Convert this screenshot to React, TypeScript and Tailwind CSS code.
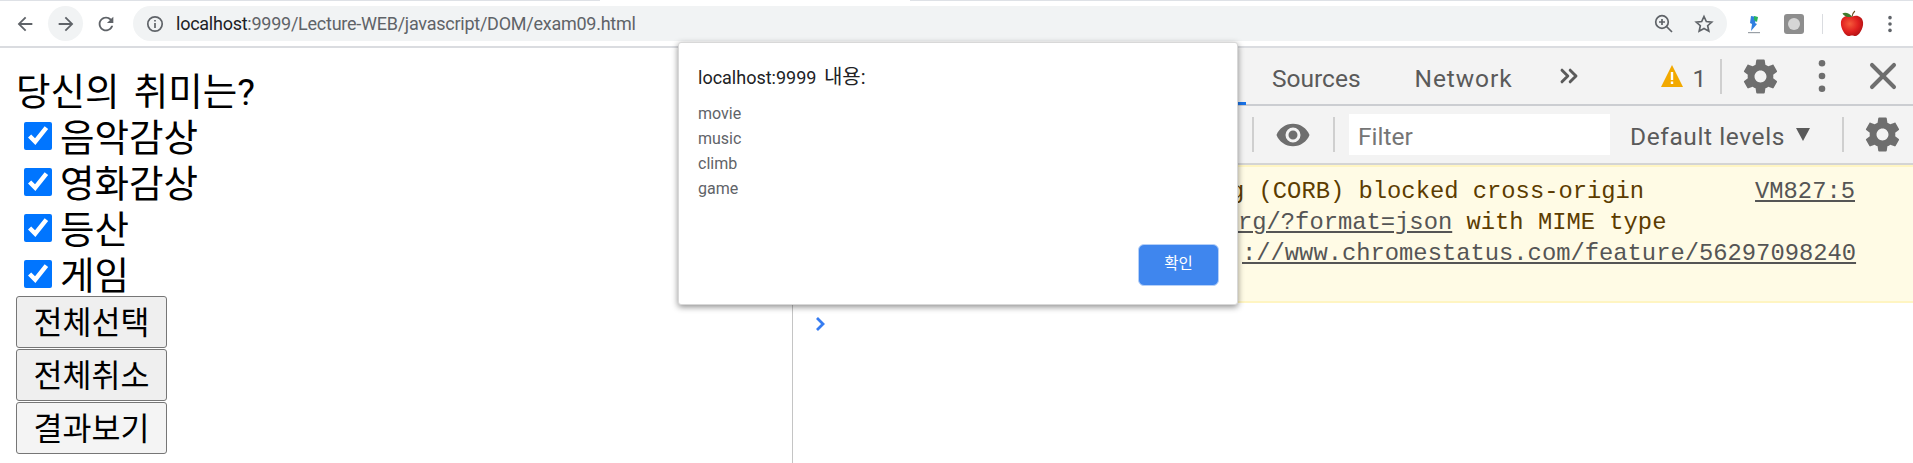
import React from 'react';
import { ChevronsRight, X } from 'lucide-react';

const GEAR =
  'M19.43 12.98c.04-.32.07-.64.07-.98s-.03-.66-.07-.98l2.11-1.65c.19-.15.24-.42.12-.64l-2-3.46c-.12-.22-.39-.3-.61-.22l-2.49 1c-.52-.4-1.08-.73-1.69-.98l-.38-2.65C14.46 2.18 14.25 2 14 2h-4c-.25 0-.46.18-.49.42l-.38 2.65c-.61.25-1.17.59-1.69.98l-2.49-1c-.23-.09-.49 0-.61.22l-2 3.46c-.13.22-.07.49.12.64l2.11 1.65c-.04.32-.07.65-.07.98s.03.66.07.98l-2.11 1.65c-.19.15-.24.42-.12.64l2 3.46c.12.22.39.3.61.22l2.49-1c.52.4 1.08.73 1.69.98l.38 2.65c.03.24.24.42.49.42h4c.25 0 .46-.18.49-.42l.38-2.65c.61-.25 1.17-.59 1.69-.98l2.49 1c.23.09.49 0 .61-.22l2-3.46c.12-.22.07-.49-.12-.64l-2.11-1.65zM12 15.5c-1.93 0-3.5-1.57-3.5-3.5s1.57-3.5 3.5-3.5 3.5 1.57 3.5 3.5-1.57 3.5-3.5 3.5z';

function Glyph({ d, className }: { d: string; className: string }) {
  return (
    <svg viewBox="0 0 24 24" className={className} fill="currentColor">
      <path d={d} />
    </svg>
  );
}

function Dots({ className, r = 2.2 }: { className: string; r?: number }) {
  return (
    <svg viewBox="0 0 24 24" className={className} fill="currentColor">
      <circle cx="12" cy="3.500" r={r} />
      <circle cx="12" cy="12" r={r} />
      <circle cx="12" cy="20.500" r={r} />
    </svg>
  );
}

function Apple() {
  return (
    <svg viewBox="0 0 26 28" className="w-[26px] h-[27px]">
      <defs>
        <radialGradient id="appleRed" cx="0.4" cy="0.4" r="0.7">
          <stop offset="0" stopColor="#f65a3a" />
          <stop offset="0.55" stopColor="#e0201f" />
          <stop offset="1" stopColor="#a90f12" />
        </radialGradient>
      </defs>
      <path d="M13 7C9 4.500 2 6 1.500 13c-.4 6.500 4.500 14 8 14 1.500 0 2-.6 3.500-.6s2 .6 3.500.6c3.500 0 8.500-7.500 8-14C24 6 17 4.500 13 7z" fill="url(#appleRed)" />
      <path d="M13 7c-2.500-3.500-6.500-5-10-3.500C5 6.500 9 8 13 7z" fill="#3f7a2c" />
      <path d="M13 7c.3-2.500 1.300-4.500 3-6" stroke="#6b4a1f" strokeWidth="1.200" fill="none" />
    </svg>
  );
}

function Toolbar() {
  return (
    <div className="h-[48px] shrink-0 bg-white border-b-2 border-[#dadce0] flex flex-col text-[#5f6368]">
      <div className="h-px flex justify-between">
        <div className="w-[600px] bg-[#dee1e6]" />
        <div className="w-[1003px] bg-[#dee1e6]" />
      </div>
      <div className="flex-1 flex items-center pl-[7px]">
        <button className="w-[36px] h-[36px] flex items-center justify-center">
          <Glyph d="M20 11H7.830l5.590-5.590L12 4l-8 8 8 8 1.410-1.410L7.830 13H20v-2z" className="w-[22px] h-[22px]" />
        </button>
        <button className="ml-[5px] w-[35px] h-[35px] rounded-full bg-[#f1f3f4] flex items-center justify-center">
          <Glyph d="M12 4l-1.410 1.410L16.170 11H4v2h12.170l-5.580 5.590L12 20l8-8z" className="w-[22px] h-[22px]" />
        </button>
        <button className="ml-[5px] w-[36px] h-[36px] flex items-center justify-center">
          <Glyph d="M17.650 6.350C16.200 4.900 14.210 4 12 4c-4.420 0-7.990 3.580-7.990 8s3.570 8 7.990 8c3.730 0 6.840-2.550 7.730-6h-2.080c-.82 2.330-3.040 4-5.650 4-3.310 0-6-2.690-6-6s2.690-6 6-6c1.660 0 3.140.69 4.220 1.780L13 11h7V4l-2.350 2.350z" className="w-[22px] h-[22px]" />
        </button>
        <div className="ml-[9px] w-[1594px] h-[35px] rounded-full bg-[#f1f3f4] flex items-center pl-[13px] pr-[13px]">
          <svg viewBox="0 0 18 18" className="w-[18px] h-[18px]" fill="none" stroke="currentColor" strokeWidth="1.700">
            <circle cx="9" cy="9" r="7.200" />
            <path d="M9 8v5M9 5v1.600" />
          </svg>
          <span className="ml-[12px] text-[18px] tracking-[-0.25px]">
            <span className="text-[#202124]">localhost</span>:9999/Lecture-WEB/javascript/DOM/exam09.html
          </span>
          <svg viewBox="0 0 20 20" className="ml-auto w-[20px] h-[20px]" fill="none" stroke="currentColor" strokeWidth="1.700">
            <circle cx="8" cy="8" r="6.300" />
            <path d="M12.500 12.500L18 18M8 5v6M5 8h6" />
          </svg>
          <svg viewBox="0 0 24 24" className="ml-[20px] w-[20px] h-[20px]" fill="none" stroke="currentColor" strokeWidth="2">
            <path d="M12 3l2.800 6 6.500.7-4.900 4.400 1.400 6.500L12 17.300l-5.800 3.300 1.400-6.500L2.700 9.700 9.200 9z" />
          </svg>
        </div>
        <svg viewBox="0 0 20 20" className="ml-[17px] w-[20px] h-[22px]">
          <path d="M7 2l6 1-2 6 2 1-6 7 1-7-2-1z" fill="#2f7fe0" />
          <path d="M10 2l4 1-1 5-3-2z" fill="#29b35a" />
          <rect x="4" y="18" width="12" height="1.200" fill="#9aa0a6" />
        </svg>
        <div className="ml-[20px] w-[20px] h-[20px] rounded-[3px] bg-[#8e8e8e] flex items-center justify-center">
          <div className="w-[12px] h-[12px] rounded-full bg-[#d6d6d6]" />
        </div>
        <div className="ml-[18px] w-px h-[20px] bg-[#dadce0]" />
        <div className="ml-[16px]">
          <Apple />
        </div>
        <Dots className="ml-[16px] w-[18px] h-[18px]" r={2.400} />
      </div>
    </div>
  );
}

function Page() {
  const hobbies = ['음악감상', '영화감상', '등산', '게임'];
  const actions = ['전체선택', '전체취소', '결과보기'];
  return (
    <div className="w-[792px] shrink-0 bg-white pl-[16px] pt-[19px] text-black text-[37.5px] leading-[46px]">
      <div className="h-[46px] pt-[2px] [word-spacing:5px]">당신의 취미는?</div>
      {hobbies.map((label) => (
        <label key={label} className="h-[46px] flex items-center">
          <input type="checkbox" defaultChecked className="ml-[8px] mr-[8px] w-[28px] h-[28px] m-0 accent-[#0075ff]" />
          <span className="pt-[4px]">{label}</span>
        </label>
      ))}
      <div className="flex flex-col items-start gap-px -mt-px">
        {actions.map((label, i) => (
          <button
            key={label}
            className={`w-[151px] h-[52px] pt-[3px] text-[31.5px] leading-none border border-[#767676] rounded-[3px] text-black ${
              i === 2 ? 'bg-[#f4f4f4]' : 'bg-[#efefef]'
            }`}
          >
            {label}
          </button>
        ))}
      </div>
    </div>
  );
}

function Sep({ className }: { className: string }) {
  return <div className={`w-[2px] h-[35px] bg-[#cfcfcf] ${className}`} />;
}

function DevTools() {
  return (
    <div className="flex-1 border-l border-[#c4c4c4] bg-white flex flex-col text-[#5a5a5a] text-[24.5px]">
      <div className="h-[58px] bg-[#f3f3f3] border-b-2 border-[#cbcdd1] flex items-center">
        <div className="w-[300px]" />
        <div className="w-[153px] h-full border-b-[3px] -mb-[2px] border-[#1a73e8] flex items-center justify-center">
          Console
        </div>
        <span className="ml-[26px] pt-[6px]">Sources</span>
        <span className="ml-[54px] pt-[6px] tracking-[0.9px]">Network</span>
        <ChevronsRight className="ml-[43px] w-[28px] h-[28px]" strokeWidth={2.500} />
        <svg viewBox="0 0 22 22" className="ml-[78px] w-[22px] h-[22px]">
          <path d="M11 0l11 22H0z" fill="#f2a900" />
          <path d="M9.800 7h2.400v8H9.800zM9.800 16.500h2.400V19H9.800z" fill="#fff" />
        </svg>
        <span className="ml-[9px] pt-[6px]">1</span>
        <Sep className="ml-[14px]" />
        <Glyph d={GEAR} className="ml-[18px] w-[41px] h-[41px] text-[#6e6e6e]" />
        <Dots className="ml-[23px] w-[36px] h-[36px] text-[#6e6e6e]" />
        <X className="ml-[21px] w-[44px] h-[44px] text-[#6e6e6e]" strokeWidth={2.200} />
      </div>
      <div className="h-[59px] bg-[#f3f3f3] border-b-2 border-[#d4d4d4] flex items-center">
        <div className="w-[459px]" />
        <Sep className="" />
        <svg viewBox="0 0 24 24" className="ml-[21px] w-[36px] h-[36px] text-[#6e6e6e]" fill="currentColor">
          <path d="M12 4.500C7 4.500 2.700 7.600 1 12c1.700 4.400 6 7.500 11 7.500s9.300-3.100 11-7.500c-1.700-4.400-6-7.500-11-7.500zM12 17a5 5 0 1 1 0-10 5 5 0 0 1 0 10zm0-8a3 3 0 1 0 0 6 3 3 0 0 0 0-6z" />
        </svg>
        <Sep className="ml-[22px]" />
        <div className="ml-[14px] w-[261px] h-[41px] bg-white flex items-center pl-[9px] pt-[6px] text-[#757575]">Filter</div>
        <span className="ml-[20px] pt-[6px] tracking-[0.6px]">Default levels</span>
        <div className="ml-[11px] w-0 h-0 border-x-[7px] border-x-transparent border-t-[13px] border-t-[#5a5a5a]" />
        <Sep className="ml-[32px]" />
        <Glyph d={GEAR} className="ml-[18px] w-[41px] h-[41px] text-[#6e6e6e]" />
      </div>
      <div className="relative h-[138px] bg-[#fffbe5] border-y-2 border-[#fff5c2] pl-[437px] pt-[9px] font-['Liberation_Mono',monospace] text-[23.8px] leading-[31px] text-[#5c3c00] whitespace-pre">
        <div>g (CORB) blocked cross-origin</div>
        <div className="ml-[8px]">
          <span className="underline text-[#555]">rg/?format=json</span> with MIME type
        </div>
        <div className="ml-[12px]">
          <span className="underline text-[#555]">://www.chromestatus.com/feature/56297098240</span>
        </div>
        <span className="absolute right-[58px] top-[9px] underline text-[#555]">VM827:5</span>
      </div>
      <div className="pl-[22px] pt-[13px]">
        <svg viewBox="0 0 12 16" className="w-[12px] h-[16px]" fill="none" stroke="#367cf1" strokeWidth="2.800">
          <path d="M2 2l6 6-6 6" />
        </svg>
      </div>
    </div>
  );
}

function AlertDialog() {
  return (
    <div className="absolute left-[678px] top-[42px] w-[560px] h-[263px] bg-white rounded-[3px] border border-[#d8d8d8] shadow-[0_2px_6px_rgba(0,0,0,0.45)] pl-[19px] pr-[18px] pt-[22px] flex flex-col text-[#5f6368]">
      <div className="h-[24px] text-[18px] leading-[24px] text-[#202124] [word-spacing:3px]">
        localhost:9999 <span className="text-[20px]">내용:</span>
      </div>
      <div className="mt-[12px] text-[16px] leading-[25px]">
        <div>movie</div>
        <div>music</div>
        <div>climb</div>
        <div>game</div>
      </div>
      <button className="mt-auto mb-[18px] self-end w-[81px] h-[42px] rounded-[6px] bg-[#3f86ee] border border-[#b5d0f8] text-white text-[15.5px]">
        확인
      </button>
    </div>
  );
}

export default function App() {
  return (
    <div className="relative w-[1913px] h-[463px] overflow-hidden flex flex-col bg-white font-['Roboto','Noto_Sans_CJK_KR',sans-serif]">
      <Toolbar />
      <div className="flex-1 flex min-h-0">
        <Page />
        <DevTools />
      </div>
      <AlertDialog />
    </div>
  );
}
